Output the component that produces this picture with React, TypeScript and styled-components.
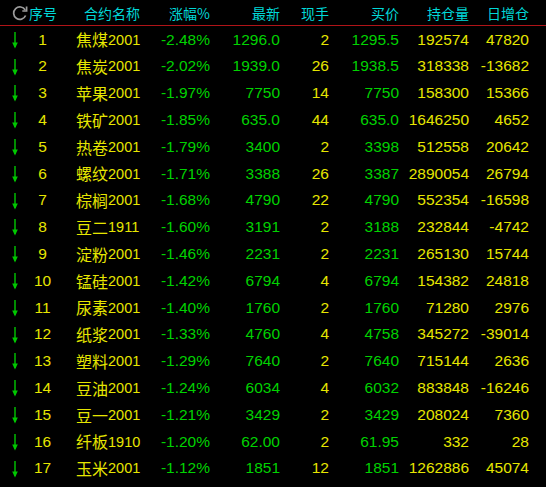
import React from "react";
import styled, { createGlobalStyle } from "styled-components";

const Global = createGlobalStyle`
  html, body { margin: 0; padding: 0; background: #000; }
  body { width: 546px; height: 487px; overflow: hidden; }
`;

const COLS = "29px 27px 94px 60px 70px 49px 70px 70px 60px 17px";

const Board = styled.div`
  width: 546px;
  height: 487px;
  background: #000;
  overflow: hidden;
  font-family: "Liberation Sans", Arial, sans-serif;
`;

const HeaderRow = styled.div`
  display: grid;
  grid-template-columns: ${COLS};
  height: 25px;
  align-items: center;
  border-bottom: 1px solid #b01418;
  color: #00d8d8;
  font-family: "Noto Sans CJK SC", sans-serif;
  font-size: 14px;
  line-height: 1;
`;

const HCell = styled.div<{ $align?: string; $pad?: number }>`
  text-align: ${(p) => p.$align || "right"};
  padding-left: ${(p) => p.$pad || 0}px;
  white-space: nowrap;
`;

const IconCell = styled.div`
  display: flex;
  justify-content: flex-end;
  padding-right: 0px;
  align-items: center;
`;

const Row = styled.div`
  display: grid;
  grid-template-columns: ${COLS};
  height: 26.8px;
  align-items: center;
  font-size: 15.5px;
  line-height: 1;
`;

const Cell = styled.div<{ $color: "y" | "g"; $align?: string; $pad?: number }>`
  color: ${(p) => (p.$color === "y" ? "#e6e600" : "#00d200")};
  text-align: ${(p) => p.$align || "right"};
  padding-left: ${(p) => p.$pad || 0}px;
  white-space: nowrap;
`;

const NameCell = styled.div`
  color: #e6e600;
  display: flex;
  align-items: center;
  padding-left: 20px;
  white-space: nowrap;
`;

const ArrowCell = styled.div`
  display: flex;
  justify-content: center;
  align-items: center;
  height: 100%;
  padding-top: 2px;
`;

const NameCJK = styled.span`
  font-family: "Noto Sans CJK SC", sans-serif;
  font-size: 16px;
  line-height: 1;
`;

const NameNum = styled.span`
  font-family: "Liberation Sans", Arial, sans-serif;
  font-size: 14.5px;
  line-height: 1;
  padding-top: 1px;
`;

const RefreshIcon = () => (
  <svg width="17" height="16" viewBox="0 0 17 16">
    <path
      d="M13.2 5 A6.2 6.2 0 1 0 13.6 10.5"
      fill="none"
      stroke="#9c9c9c"
      strokeWidth="1.7"
    />
    <path d="M10.3 6 L14.6 6 L14.6 1.6" fill="none" stroke="#9c9c9c" strokeWidth="1.7" />
  </svg>
);

const DownArrow = () => (
  <svg width="8" height="17" viewBox="0 0 8 17">
    <line x1="4" y1="0" x2="4" y2="15" stroke="#00c800" strokeWidth="1.4" />
    <path d="M1.2 10.5 L4 16.5 L6.8 10.5 Z" fill="#00c800" />
  </svg>
);

type R = [string, string, string, string, string, string, string, string];

const rows: R[] = [
  ["焦煤", "2001", "-2.48%", "1296.0", "2", "1295.5", "192574", "47820"],
  ["焦炭", "2001", "-2.02%", "1939.0", "26", "1938.5", "318338", "-13682"],
  ["苹果", "2001", "-1.97%", "7750", "14", "7750", "158300", "15366"],
  ["铁矿", "2001", "-1.85%", "635.0", "44", "635.0", "1646250", "4652"],
  ["热卷", "2001", "-1.79%", "3400", "2", "3398", "512558", "20642"],
  ["螺纹", "2001", "-1.71%", "3388", "26", "3387", "2890054", "26794"],
  ["棕榈", "2001", "-1.68%", "4790", "22", "4790", "552354", "-16598"],
  ["豆二", "1911", "-1.60%", "3191", "2", "3188", "232844", "-4742"],
  ["淀粉", "2001", "-1.46%", "2231", "2", "2231", "265130", "15744"],
  ["锰硅", "2001", "-1.42%", "6794", "4", "6794", "154382", "24818"],
  ["尿素", "2001", "-1.40%", "1760", "2", "1760", "71280", "2976"],
  ["纸浆", "2001", "-1.33%", "4760", "4", "4758", "345272", "-39014"],
  ["塑料", "2001", "-1.29%", "7640", "2", "7640", "715144", "2636"],
  ["豆油", "2001", "-1.24%", "6034", "4", "6032", "883848", "-16246"],
  ["豆一", "2001", "-1.21%", "3429", "2", "3429", "208024", "7360"],
  ["纤板", "1910", "-1.20%", "62.00", "2", "61.95", "332", "28"],
  ["玉米", "2001", "-1.12%", "1851", "12", "1851", "1262886", "45074"],
];

export default function App() {
  return (
    <>
      <Global />
      <Board>
        <HeaderRow>
          <IconCell>
            <RefreshIcon />
          </IconCell>
          <HCell $align="left">序号</HCell>
          <HCell $align="left" $pad={28}>合约名称</HCell>
          <HCell>涨幅%</HCell>
          <HCell>最新</HCell>
          <HCell>现手</HCell>
          <HCell>买价</HCell>
          <HCell>持仓量</HCell>
          <HCell>日增仓</HCell>
          <div />
        </HeaderRow>
        {rows.map((r, i) => (
          <Row key={i}>
            <ArrowCell>
              <DownArrow />
            </ArrowCell>
            <Cell $color="y" $align="center">{i + 1}</Cell>
            <NameCell>
              <NameCJK>{r[0]}</NameCJK>
              <NameNum>{r[1]}</NameNum>
            </NameCell>
            <Cell $color="g">{r[2]}</Cell>
            <Cell $color="g">{r[3]}</Cell>
            <Cell $color="y">{r[4]}</Cell>
            <Cell $color="g">{r[5]}</Cell>
            <Cell $color="y">{r[6]}</Cell>
            <Cell $color="y">{r[7]}</Cell>
            <div />
          </Row>
        ))}
      </Board>
    </>
  );
}
